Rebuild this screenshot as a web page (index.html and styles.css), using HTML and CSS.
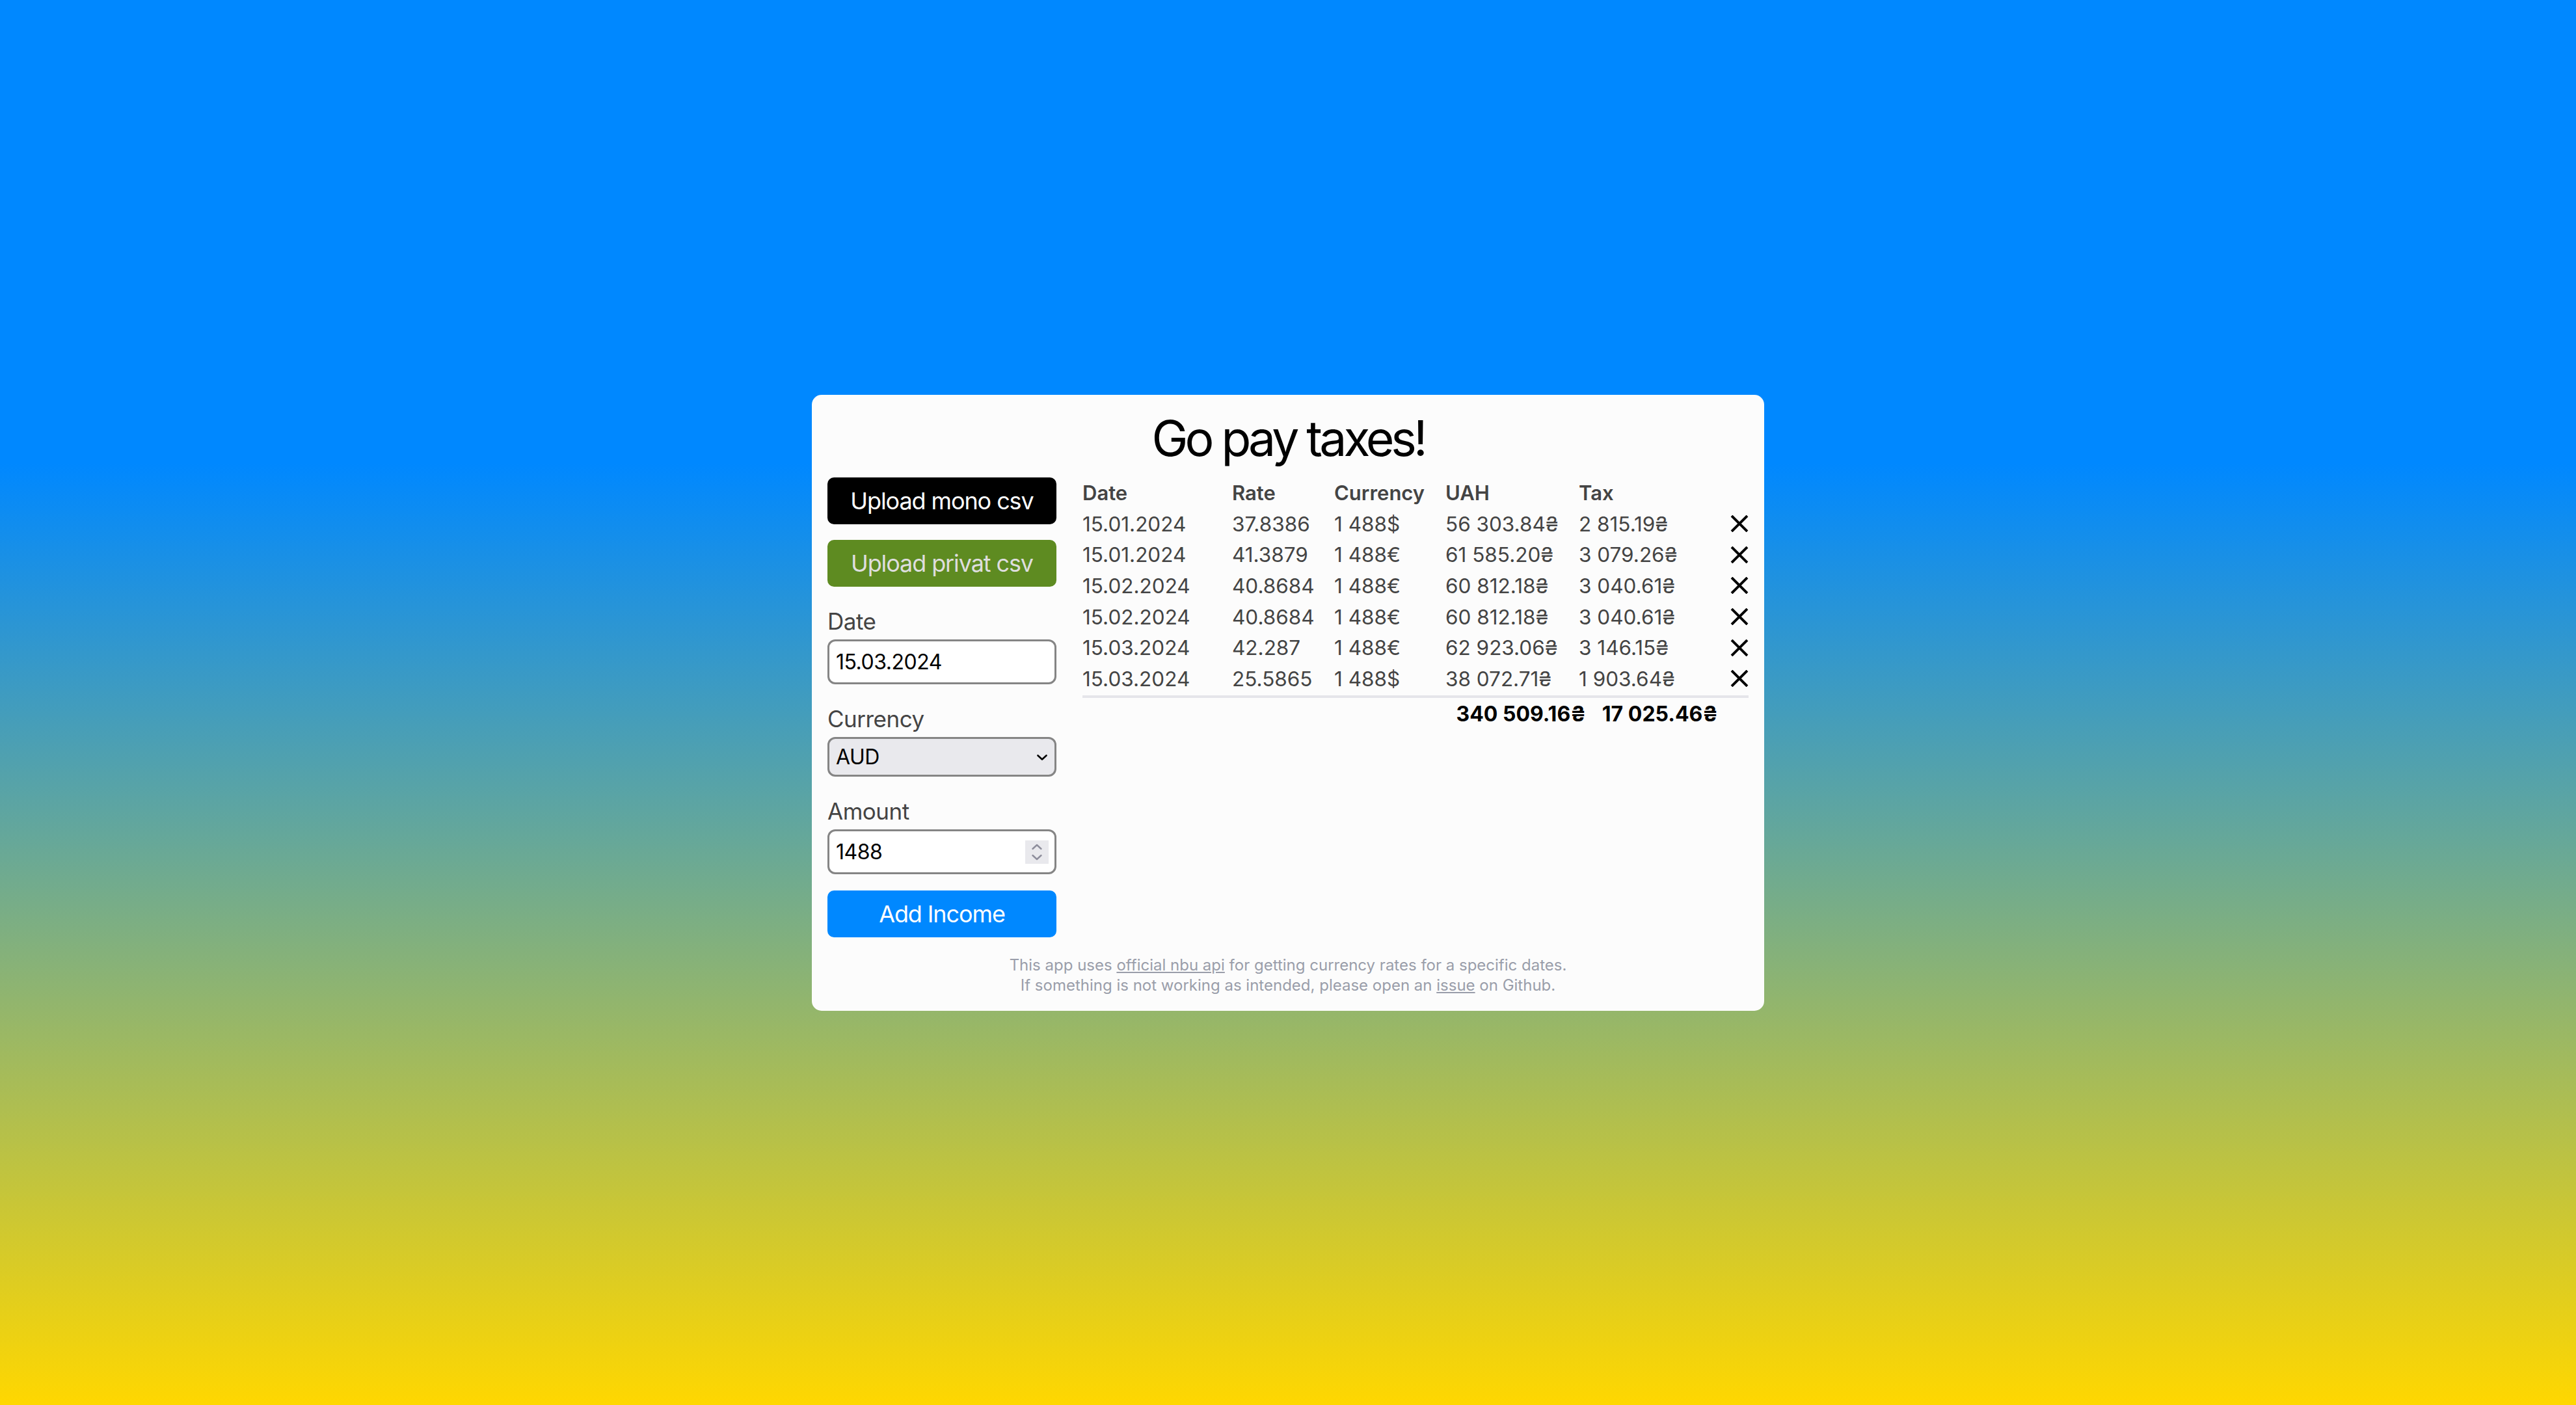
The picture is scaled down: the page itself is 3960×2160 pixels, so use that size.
FILE: index.html
```html
<!DOCTYPE html>
<html lang="en">
  <head>
    <meta charset="UTF-8" />
    <meta name="viewport" content="width=device-width, initial-scale=1.0" />
    <title>Go pay taxes!</title>
    <link rel="stylesheet" href="styles.css">
  </head>
  <body>
    <div class="card">
      <h1 class="title">Go pay taxes!</h1>
      <div class="main">
        <div class="side">
          <button class="btn btn-mono">Upload mono csv</button>
          <button class="btn btn-privat">Upload privat csv</button>
          <div class="field">
            <label for="date">Date</label>
            <input id="date" class="input" type="text" value="15.03.2024" />
          </div>
          <div class="field">
            <label for="currency">Currency</label>
            <div class="select-wrap">
              <select id="currency" class="select">
                <option>AUD</option>
                <option>USD</option>
                <option>EUR</option>
              </select>
              <svg class="select-arrow" width="16" height="9" viewBox="0 0 16 9">
                <path d="M1.5 1.5 L8 7.5 L14.5 1.5" fill="none" stroke="#000" stroke-width="2.6" stroke-linecap="round" stroke-linejoin="round" />
              </svg>
            </div>
          </div>
          <div class="field">
            <label for="amount">Amount</label>
            <div class="number-wrap">
              <input id="amount" class="input" type="text" value="1488" />
              <span class="spinner">
                <svg width="36" height="36" viewBox="0 0 36 36">
                  <path d="M11.5 13 L18 7 L24.5 13" fill="none" stroke="#8e8e9c" stroke-width="2.4" stroke-linecap="round" stroke-linejoin="round" />
                  <path d="M11.5 23 L18 29 L24.5 23" fill="none" stroke="#8e8e9c" stroke-width="2.4" stroke-linecap="round" stroke-linejoin="round" />
                </svg>
              </span>
            </div>
          </div>
          <button class="btn btn-add">Add Income</button>
        </div>
        <div class="incomes">
          <table class="income-table">
            <thead>
              <tr>
                <th class="col-date">Date</th>
                <th class="col-rate">Rate</th>
                <th class="col-cur">Currency</th>
                <th class="col-uah">UAH</th>
                <th class="col-tax">Tax</th>
                <th class="col-del"></th>
              </tr>
            </thead>
            <tbody id="rows"></tbody>
          </table>
          <div class="divider"></div>
          <div class="totals">
            <span>340 509.16₴</span>
            <span>17 025.46₴</span>
          </div>
        </div>
      </div>
      <p class="footer">
        This app uses <a href="#">official nbu api</a> for getting currency rates for a specific dates.<br />
        If something is not working as intended, please open an <a href="#">issue</a> on Github.
      </p>
    </div>
    <script>
      document.addEventListener("DOMContentLoaded", () => {
        const incomes = [
          ["15.01.2024", "37.8386", "1 488$", "56 303.84₴", "2 815.19₴"],
          ["15.01.2024", "41.3879", "1 488€", "61 585.20₴", "3 079.26₴"],
          ["15.02.2024", "40.8684", "1 488€", "60 812.18₴", "3 040.61₴"],
          ["15.02.2024", "40.8684", "1 488€", "60 812.18₴", "3 040.61₴"],
          ["15.03.2024", "42.287", "1 488€", "62 923.06₴", "3 146.15₴"],
          ["15.03.2024", "25.5865", "1 488$", "38 072.71₴", "1 903.64₴"],
        ];
        const rows = document.getElementById("rows");
        const cross =
          '<svg width="28" height="26" viewBox="0 0 28 26"><path d="M2 1 L26 25 M26 1 L2 25" stroke="#000" stroke-width="3.9" /></svg>';

        incomes.forEach((income) => {
          const tr = document.createElement("tr");
          income.forEach((value) => {
            const td = document.createElement("td");
            td.textContent = value;
            tr.appendChild(td);
          });
          const del = document.createElement("td");
          del.className = "del";
          del.innerHTML = cross;
          tr.appendChild(del);
          rows.appendChild(tr);
        });
      });
    </script>
  </body>
</html>
```

FILE: styles.css
```css
* {
  margin: 0;
  padding: 0;
  box-sizing: border-box;
  font-family: "Inter", "DejaVu Sans", sans-serif;
}
body {
  min-height: 100vh;
  display: flex;
  justify-content: center;
  align-items: center;
  background: linear-gradient(to bottom, #0088ff 0%, #0088ff 33%, #ffd700 100%);
}
.card {
  width: 1464px;
  background: #fcfcfc;
  border-radius: 15px;
  padding: 19px 24px 24px;
}
.title {
  font-size: 75px;
  font-weight: 400;
  line-height: 96px;
  text-align: center;
  color: #000;
  letter-spacing: -5px;
}
.main {
  display: flex;
  gap: 40px;
  margin-top: 12px;
}
.side {
  width: 352px;
  flex-shrink: 0;
  display: flex;
  flex-direction: column;
  gap: 24px;
}
.btn {
  width: 100%;
  height: 72px;
  border: none;
  border-radius: 10px;
  font-size: 36px;
  letter-spacing: -1.1px;
  color: #fff;
  cursor: pointer;
}
.btn-mono {
  background: #000;
}
.btn-privat {
  background: #5e8b21;
  color: #dedede;
}
.btn-add {
  background: #0088ff;
  margin-top: 1px;
}
.field {
  margin-top: 8px;
  display: flex;
  flex-direction: column;
}
.field label {
  font-size: 35px;
  line-height: 42px;
  color: #444;
  margin-bottom: 7px;
  letter-spacing: -0.5px;
}
.input,
.select {
  width: 100%;
  border: 3px solid #858585;
  border-radius: 12px;
  padding: 0 10px;
  font-size: 32px;
  letter-spacing: -0.5px;
  color: #000;
  outline: none;
}
.input {
  height: 69px;
  background: #fff;
}
.select-wrap,
.number-wrap {
  position: relative;
}
.select {
  height: 61px;
  background: #e9e9ed;
  appearance: none;
}
.select-arrow {
  position: absolute;
  right: 14px;
  top: 27px;
  pointer-events: none;
}
.spinner {
  position: absolute;
  right: 12px;
  top: 17px;
  width: 36px;
  height: 36px;
  background: #e9e9ed;
  display: flex;
}
.incomes {
  flex: 1;
}
.income-table {
  width: 100%;
  border-collapse: collapse;
  table-layout: fixed;
}
.income-table th {
  font-size: 31px;
  font-weight: 600;
  color: #444;
  text-align: left;
  height: 47.7px;
}
.income-table td {
  font-size: 31.5px;
  color: #444;
  height: 47.7px;
  white-space: nowrap;
}
.col-date {
  width: 230px;
}
.col-rate {
  width: 157px;
}
.col-cur {
  width: 171px;
}
.col-uah {
  width: 205px;
}
.col-tax {
  width: 231px;
}
.income-table td.del {
  text-align: right;
  vertical-align: middle;
  line-height: 0;
}
.divider {
  height: 4px;
  background: #e5e5ea;
  margin-top: 2px;
}
.totals {
  display: flex;
  justify-content: flex-end;
  gap: 25px;
  padding-right: 47px;
  margin-top: 7px;
  font-size: 32px;
  line-height: 36px;
  font-weight: 700;
  color: #000;
}
.footer {
  margin-top: 27px;
  text-align: center;
  font-size: 24px;
  line-height: 31px;
  color: #9a9eaa;
}
.footer a {
  color: #9a9eaa;
  text-decoration: underline;
}
```
